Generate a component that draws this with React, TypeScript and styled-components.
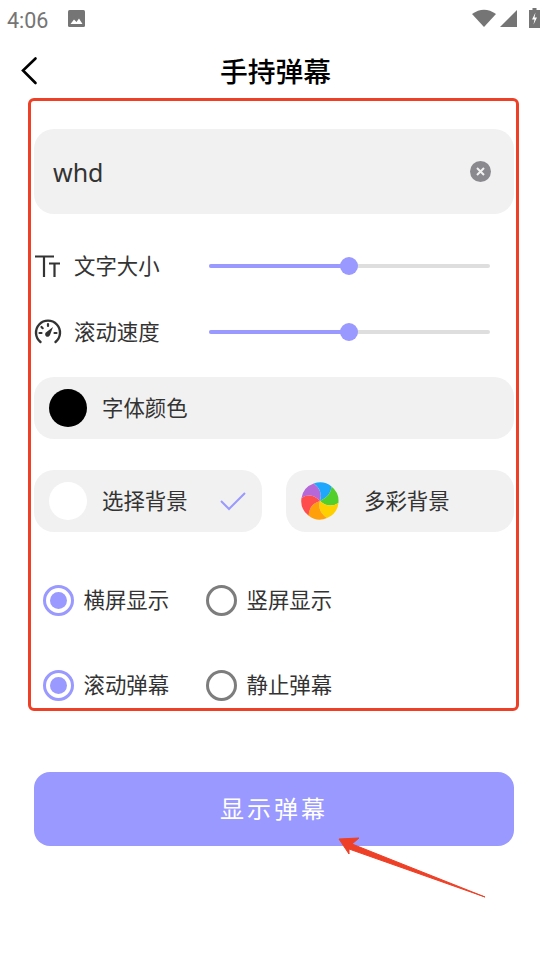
import styled, { createGlobalStyle } from "styled-components";

const GlobalStyle = createGlobalStyle`
  html, body {
    margin: 0;
    padding: 0;
    background: #fff;
  }
  body {
    font-family: "Noto Sans CJK SC", "Noto Sans", sans-serif;
  }
`;

const Page = styled.div`
  position: relative;
  width: 551px;
  height: 966px;
  overflow: hidden;
  background: #fff;
`;

const StatusBar = styled.div`
  display: flex;
  align-items: center;
  height: 36px;
  padding: 0 11px 0 7px;
  color: #757575;
`;

const Clock = styled.span`
  width: 61px;
  padding-top: 4px;
  font-family: Roboto, sans-serif;
  font-size: 21.5px;
`;

const StatusRight = styled.div`
  display: flex;
  align-items: center;
  margin-left: auto;
`;

const SignalIcon = styled.svg`
  margin: 0 12px 0 4px;
`;

const Header = styled.div`
  display: flex;
  align-items: center;
  justify-content: center;
  position: relative;
  height: 70px;
`;

const BackButton = styled.button`
  position: absolute;
  left: 20px;
  top: 20px;
  width: 20px;
  height: 30px;
  padding: 0;
  border: 0;
  background: none;
  display: flex;
`;

const Title = styled.h1`
  margin: 0;
  padding-bottom: 3px;
  font-size: 27.8px;
  font-weight: 500;
  color: #000;
`;

const Content = styled.div`
  display: flex;
  flex-direction: column;
  width: 480px;
  margin: 23px 0 0 34px;
`;

const InputBox = styled.div`
  display: flex;
  align-items: center;
  justify-content: space-between;
  height: 85px;
  padding: 0 23px 0 19px;
  box-sizing: border-box;
  border-radius: 20px;
  background: #f1f1f1;
`;

const InputText = styled.span`
  font-family: "Noto Sans", sans-serif;
  font-size: 25px;
  color: #333;
`;

const SliderRow = styled.div<{ $top: number }>`
  display: flex;
  align-items: center;
  height: 40px;
  margin-top: ${({ $top }) => $top}px;
`;

const RowIcon = styled.span`
  display: flex;
  width: 40px;
  flex: none;
`;

const RowLabel = styled.span`
  width: 135px;
  flex: none;
  padding-bottom: 4px;
  font-size: 21.4px;
  color: #333;
`;

const Track = styled.div`
  position: relative;
  width: 281px;
  height: 4px;
  border-radius: 2px;
  background: #dedede;
`;

const TrackFill = styled.div`
  height: 100%;
  border-radius: 2px;
  background: #9999ff;
`;

const Thumb = styled.div`
  position: absolute;
  top: -7px;
  width: 18px;
  height: 18px;
  margin-left: -9px;
  border-radius: 50%;
  background: #9999ff;
`;

const ColorRow = styled.div`
  display: flex;
  align-items: center;
  gap: 15px;
  height: 62px;
  margin-top: 25px;
  padding-left: 15px;
  border-radius: 20px;
  background: #f1f1f1;
`;

const Swatch = styled.div<{ $color: string }>`
  width: 38px;
  height: 38px;
  flex: none;
  border-radius: 50%;
  background: ${({ $color }) => $color};
`;

const OptionLabel = styled.span`
  padding-bottom: 4px;
  font-size: 21.4px;
  color: #333;
`;

const CardRow = styled.div`
  display: flex;
  justify-content: space-between;
  margin-top: 31px;
`;

const Card = styled.div<{ $width: number; $gap: number }>`
  display: flex;
  align-items: center;
  gap: ${({ $gap }) => $gap}px;
  position: relative;
  width: ${({ $width }) => $width}px;
  height: 62px;
  padding-left: 15px;
  box-sizing: border-box;
  border-radius: 20px;
  background: #f1f1f1;
`;

const CheckMark = styled.svg`
  position: absolute;
  right: 16px;
  top: 21px;
`;

const RadioRow = styled.div<{ $top: number }>`
  display: flex;
  align-items: center;
  height: 32px;
  margin-top: ${({ $top }) => $top}px;
  padding-left: 9px;
`;

const RadioOption = styled.div`
  display: flex;
  align-items: center;
  gap: 9.5px;
  width: 163px;
`;

const RadioCircle = styled.span<{ $on: boolean }>`
  display: flex;
  align-items: center;
  justify-content: center;
  width: 31px;
  height: 31px;
  box-sizing: border-box;
  border-radius: 50%;
  border: 3px solid ${({ $on }) => ($on ? "#9999ff" : "#7d7d7d")};
`;

const RadioDot = styled.span`
  width: 17px;
  height: 17px;
  border-radius: 50%;
  background: #9999ff;
`;

const SubmitButton = styled.button`
  display: block;
  width: 480px;
  height: 74px;
  margin: 71px 0 0 34px;
  padding: 0 0 4px;
  border: 0;
  border-radius: 16px;
  background: #9999ff;
  color: #fff;
  font-family: inherit;
  font-size: 24px;
  letter-spacing: 3px;
`;

const RedFrame = styled.div`
  position: absolute;
  left: 28px;
  top: 98px;
  width: 491px;
  height: 613px;
  box-sizing: border-box;
  border: 3px solid #ee4026;
  border-radius: 6px;
  pointer-events: none;
`;

const Arrow = styled.svg`
  position: absolute;
  left: 330px;
  top: 830px;
`;

function Radio({ label, on }: { label: string; on?: boolean }) {
  return (
    <RadioOption>
      <RadioCircle $on={!!on}>{on && <RadioDot />}</RadioCircle>
      <OptionLabel>{label}</OptionLabel>
    </RadioOption>
  );
}

function Slider({ percent }: { percent: number }) {
  return (
    <Track>
      <TrackFill style={{ width: `${percent}%` }} />
      <Thumb style={{ left: `${percent}%` }} />
    </Track>
  );
}

function RainbowIcon() {
  return (
    <svg width="38" height="38" viewBox="0 0 38 38">
      <path d="M19 19Q10 10 .5 16A18.500 18.500 0 0 1 12.700 1.600Q22 8 19 19z" fill="#b768d8" />
      <path d="M19 19Q22 8 12.700 1.600A18.500 18.500 0 0 1 30.500 4.500Q30 14 19 19z" fill="#1ea7fd" />
      <path d="M19 19Q30 14 30.500 4.500A18.500 18.500 0 0 1 37.400 21Q28 27 19 19z" fill="#53cf2c" />
      <path d="M19 19Q28 27 37.400 21A18.500 18.500 0 0 1 26 36.100Q16 29 19 19z" fill="#ffd000" />
      <path d="M19 19Q16 29 26 36.100A18.500 18.500 0 0 1 7.700 33.700Q8 22 19 19z" fill="#ff9f0a" />
      <path d="M19 19Q8 22 7.700 33.700A18.500 18.500 0 0 1 .5 16Q10 10 19 19z" fill="#ff4d4d" />
    </svg>
  );
}

export default function App() {
  return (
    <Page>
      <GlobalStyle />
      <StatusBar>
        <Clock>4:06</Clock>
        <svg width="17" height="17" viewBox="0 0 17 17">
          <rect width="17" height="17" rx="1.5" fill="#757575" />
          <path d="M2.5 14l3.500-4.500 2.500 2.500 2.500-3.500 3.500 5.500z" fill="#fff" />
        </svg>
        <StatusRight>
          <svg width="24" height="18" viewBox="0 0 24 18">
            <path d="M0 5Q12-3.500 24 5L12 18z" fill="#757575" />
          </svg>
          <SignalIcon width="17" height="17" viewBox="0 0 17 17">
            <path d="M17 0v17H0z" fill="#757575" />
          </SignalIcon>
          <svg width="11" height="20" viewBox="0 0 11 20">
            <path d="M3.500 0h4v2H11v18H0V2h3.500z" fill="#757575" />
            <path d="M6.500 4.500L3 11.500h2.500l-1 5L8 9.500H5.500z" fill="#fff" />
          </svg>
        </StatusRight>
      </StatusBar>

      <Header>
        <BackButton>
          <svg width="20" height="30" viewBox="0 0 20 30">
            <path
              d="M15.500 2.500L3 14.500l12.500 12.500"
              fill="none"
              stroke="#000"
              strokeWidth="2.600"
              strokeLinecap="round"
            />
          </svg>
        </BackButton>
        <Title>手持弹幕</Title>
      </Header>

      <Content>
        <InputBox>
          <InputText>whd</InputText>
          <svg width="21" height="21" viewBox="0 0 21 21">
            <circle cx="10.5" cy="10.5" r="10.5" fill="#8a8a8e" />
            <path d="M7 7l7 7M14 7l-7 7" stroke="#f1f1f1" strokeWidth="2" />
          </svg>
        </InputBox>

        <SliderRow $top={32}>
          <RowIcon>
            <svg width="28" height="24" viewBox="0 0 28 24">
              <path
                d="M1 2.500h19M10 2.500V23M15 9.500h11M20.500 9.500V23"
                fill="none"
                stroke="#333"
                strokeWidth="2.200"
              />
            </svg>
          </RowIcon>
          <RowLabel>文字大小</RowLabel>
          <Slider percent={49.8} />
        </SliderRow>

        <SliderRow $top={26}>
          <RowIcon>
            <svg width="28" height="26" viewBox="0 0 28 26">
              <path
                d="M6.500 23A12 12 0 1 1 21.500 23"
                fill="none"
                stroke="#333"
                strokeWidth="2.400"
                strokeLinecap="round"
              />
              <path d="M19 8l-6.500 5a2.500 2.500 0 1 0 3.500 3z" fill="#333" />
              <path
                d="M5.500 14h2M7.500 8l1.200 1.200M14 5v2M22.500 14h-2"
                stroke="#333"
                strokeWidth="2.200"
                strokeLinecap="round"
              />
            </svg>
          </RowIcon>
          <RowLabel>滚动速度</RowLabel>
          <Slider percent={49.8} />
        </SliderRow>

        <ColorRow>
          <Swatch $color="#000" />
          <OptionLabel>字体颜色</OptionLabel>
        </ColorRow>

        <CardRow>
          <Card $width={228} $gap={15}>
            <Swatch $color="#fff" />
            <OptionLabel>选择背景</OptionLabel>
            <CheckMark width="26" height="20" viewBox="0 0 26 20">
              <path d="M1 10l8 8L25 2" fill="none" stroke="#9999ff" strokeWidth="2" />
            </CheckMark>
          </Card>
          <Card $width={228} $gap={25}>
            <RainbowIcon />
            <OptionLabel>多彩背景</OptionLabel>
          </Card>
        </CardRow>

        <RadioRow $top={52}>
          <Radio label="横屏显示" on />
          <Radio label="竖屏显示" />
        </RadioRow>

        <RadioRow $top={53}>
          <Radio label="滚动弹幕" on />
          <Radio label="静止弹幕" />
        </RadioRow>
      </Content>

      <SubmitButton>显示弹幕</SubmitButton>

      <RedFrame />
      <Arrow width="160" height="72" viewBox="0 0 160 72">
        <path d="M9 9L29 8 22 14 155 67 19 19 19 24z" fill="#ee4026" stroke="#ee4026" strokeWidth="1" />
      </Arrow>
    </Page>
  );
}
